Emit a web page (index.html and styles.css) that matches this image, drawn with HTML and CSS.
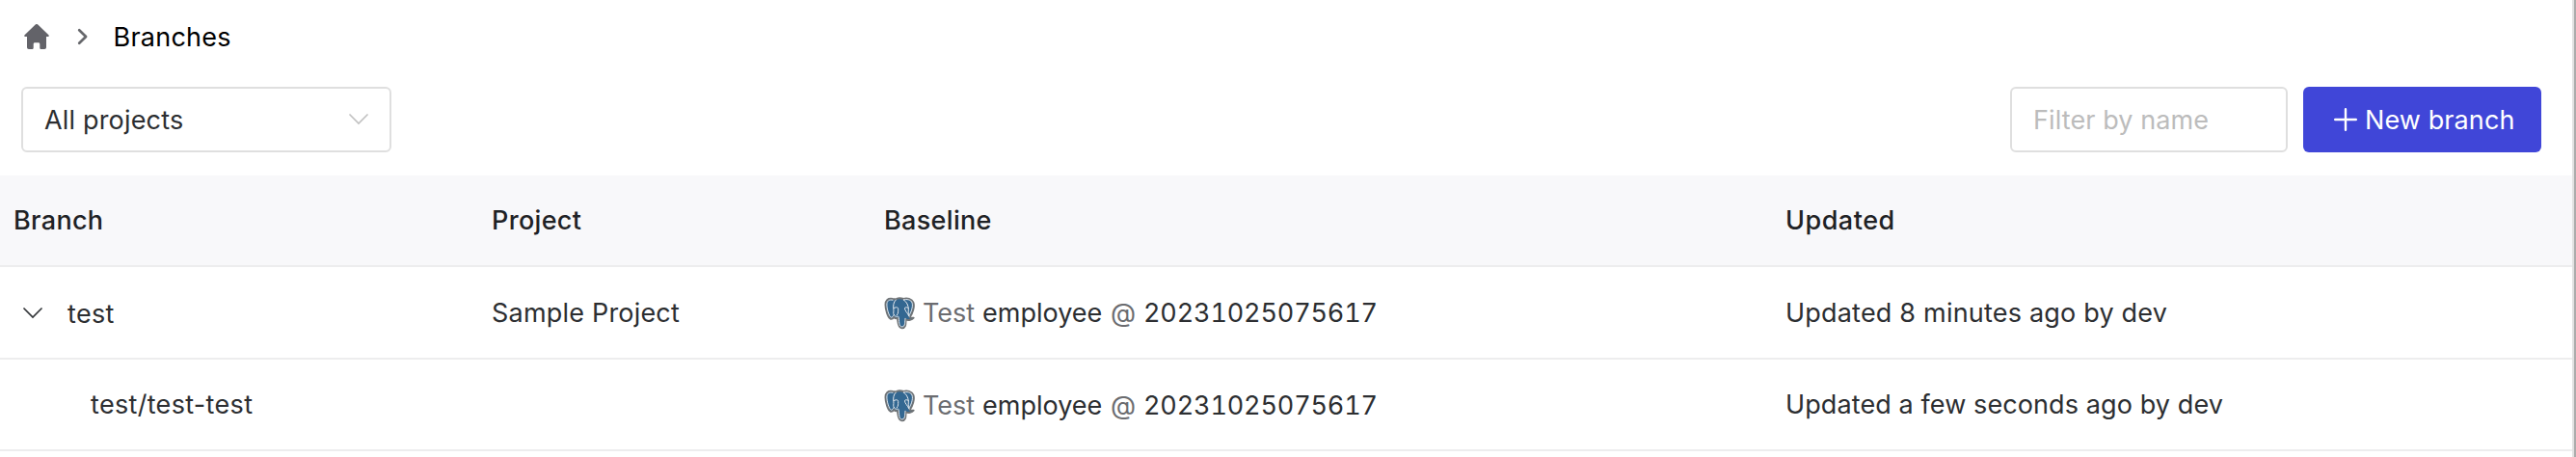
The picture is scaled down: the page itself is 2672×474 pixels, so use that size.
FILE: index.html
```html
<!DOCTYPE html>
<html lang="en">
<head>
<meta charset="utf-8">
<title>Branches</title>
<link rel="stylesheet" href="styles.css">
</head>
<body>
<svg class="defs" width="0" height="0" aria-hidden="true">
  <symbol id="postgres" viewBox="0 0 32 34">
    <path d="M9 2C4 1 1.500 3.500 1.500 8c0 5 2.500 13 5 14.500 1.500.8 2.600 0 3.700-1.500.8.900 2 1.300 3.800 1.200.8 3-.3 9.800 4.600 10 4.300.1 3.700-4.600 4-8.700 2.700.9 6.400.3 8-1.800-1.400-.2-3 .2-3.900-.7 3-4.200 5.200-11.300 3.600-15.300C28.800 1.800 23.600 1 20.300 2 17 .9 13.500 1.200 12.200 2.500 11 2 10 2 9 2Z" fill="#336791" stroke="#707477" stroke-width="2" stroke-linejoin="round"/>
    <path d="M9 3.200C5 2.300 2.900 4.200 2.900 8c0 4.600 2.300 12 4.300 13.200 1.200.4 2.400-1.600 3.300-2.900M12.200 3C9.700 5.500 9.300 9 9.900 12.700c.3 2.600-.8 4.300.5 6.200 1 1.300 2.400 1.700 3.800 1.300M20.300 2.900C23.500 5 25 8.500 25.300 12c.2 2.900-.8 4.300.8 8.200M20.300 2.900c3.200-.8 7.700-.3 8.800 3.200 1.200 3.900-1.200 10.400-3.400 13.500M22 22.300c-.6 3 .4 8.500-3.200 8.600-4.200.1-2.600-6.600-3.800-10.300M9.900 11.700c1.800-1.400 5-1.300 4.800.7-.2 2.800.4 4.400-1.400 6.500M25.300 11.500c-1.700-1.200-4-1-3.800.5.200 2.400 2.700 4.300 4 7.200" fill="none" stroke="#e4e9ee" stroke-width="1" stroke-linecap="round"/>
  </symbol>
</svg>
<main class="page">
  <nav class="crumbs">
    <svg class="home" viewBox="0 0 26 26"><path d="M11.700.6a1.800 1.800 0 0 1 2.600 0L25.400 11.300c.8.8.4 1.700-.6 1.700H23v11c0 1.200-.7 2-1.900 2h-3.200c-1 0-1.600-.7-1.600-1.600v-3.700c0-.9-.6-1.500-1.500-1.500h-3.600c-.9 0-1.500.6-1.500 1.500v3.700c0 .9-.6 1.600-1.600 1.600H4.900C3.700 26 3 25.200 3 24V13H1.200c-1 0-1.400-.9-.6-1.700Z" fill="#636369"/></svg>
    <svg class="crumb-sep" viewBox="0 0 12 18"><path d="m2.200 2.200 6.900 6.800-6.900 6.800" fill="none" stroke="#67686c" stroke-width="2.700" stroke-linecap="round" stroke-linejoin="round"/></svg>
    <span class="crumb-current">Branches</span>
  </nav>
  <div class="toolbar">
    <div class="select"><span class="select-text">All projects</span><svg class="caret" viewBox="0 0 20 12"><path d="m1 1 9 9 9-9" fill="none" stroke="#c2c2c2" stroke-width="1.700" stroke-linecap="round"/></svg></div>
    <div class="actions">
      <div class="filter"><span class="filter-text">Filter by name</span></div>
      <div class="button"><svg class="plus" viewBox="0 0 24 24"><path d="M12 1.200v21.600M1.200 12h21.600" fill="none" stroke="#fff" stroke-width="2.400" stroke-linecap="round"/></svg><span class="button-text">New branch</span></div>
    </div>
  </div>
  <div class="table">
    <div class="row head"><div class="h-branch">Branch</div><div class="h-project">Project</div><div class="h-baseline">Baseline</div><div class="h-updated">Updated</div></div>
    <div class="row first">
      <div class="branch"><svg class="expand" viewBox="0 0 20 12"><path d="m1 1 9 9 9-9" fill="none" stroke="#333639" stroke-width="1.700" stroke-linecap="round"/></svg><span class="name">test</span></div>
      <div class="project">Sample Project</div>
      <div class="baseline"><svg class="pg"><use href="#postgres"/></svg><span class="env">Test</span><span class="db">employee</span><span class="at">@</span><span class="version">20231025075617</span></div>
      <div class="updated minutes">Updated 8 minutes ago by dev</div>
    </div>
    <div class="row second">
      <div class="branch child"><span class="child-name">test/test-test</span></div>
      <div></div>
      <div class="baseline"><svg class="pg"><use href="#postgres"/></svg><span class="env">Test</span><span class="db">employee</span><span class="at">@</span><span class="version">20231025075617</span></div>
      <div class="updated seconds">Updated a few seconds ago by dev</div>
    </div>
  </div>
</main>
</body>
</html>
```
FILE: styles.css
```css
* { box-sizing: border-box; }
body { margin: 0; background: #fff; font-family: Inter, "Liberation Sans", sans-serif; font-size: 27px; line-height: 34px; color: #2c2e31; white-space: nowrap; }
svg { display: block; flex: none; }
.defs { position: absolute; }
.page { width: 2672px; height: 474px; overflow: hidden; border-right: 2px solid #acacac; box-shadow: inset -2px 0 #e2e2e2; }
.crumbs { display: flex; align-items: center; height: 76px; padding-left: 25px; }
.home { width: 26px; height: 26px; }
.crumb-sep { width: 12px; height: 18px; margin-left: 29px; }
.crumb-current { margin-left: 25.500px; padding-top: 2px; color: #000; letter-spacing: .25px; }
.toolbar { display: flex; justify-content: space-between; margin-top: 14px; padding: 0 34px 0 22px; }
.select { display: flex; align-items: center; justify-content: space-between; width: 384px; height: 68px; border: 2px solid #dfdfdf; border-radius: 6px; padding: 0 22px; }
.select-text { padding-top: 2px; letter-spacing: .17px; }
.caret { width: 20px; height: 12px; }
.actions { display: flex; gap: 16px; }
.filter { display: flex; align-items: center; width: 288px; height: 68px; border: 2px solid #dfdfdf; border-radius: 6px; padding-left: 22px; color: #bcbcbc; }
.filter-text { padding-top: 2px; letter-spacing: .1px; }
.button { display: flex; align-items: center; width: 247px; height: 68px; border-radius: 6px; background: #4046d8; color: #fff; padding-left: 32px; }
.plus { width: 24px; height: 24px; }
.button-text { margin-left: 8px; padding-top: 2px; letter-spacing: .1px; }
.table { margin-top: 24px; width: 2668px; }
.row { display: grid; grid-template-columns: 510px 407px 935px 1fr; align-items: center; height: 96px; border-bottom: 2px solid #ededee; }
.head { height: 95px; background: #f8f8fa; font-weight: 500; color: #1f2225; letter-spacing: .33px; }
.h-updated { letter-spacing: .5px; }
.second { height: 95px; }
.first > div { padding-top: 2px; }
.h-branch { padding-left: 14px; }
.branch { display: flex; align-items: center; padding-left: 24px; letter-spacing: .32px; }
.first .name { padding-top: 1px; }
.expand { width: 20px; height: 12px; }
.name { margin-left: 26px; }
.child { padding-left: 94px; }
.project { letter-spacing: .2px; }
.minutes { letter-spacing: .2px; }
.seconds { letter-spacing: .1px; }
.baseline { display: flex; align-items: center; }
.second .baseline { padding-top: 2px; }
.pg { width: 32px; height: 34px; }
.env, .at { color: #6b6c70; }
.env { width: 62px; margin-left: 8px; }
.db { width: 133px; }
.at { width: 34px; }
.version { font-variant-numeric: tabular-nums; letter-spacing: -.16px; }
```
